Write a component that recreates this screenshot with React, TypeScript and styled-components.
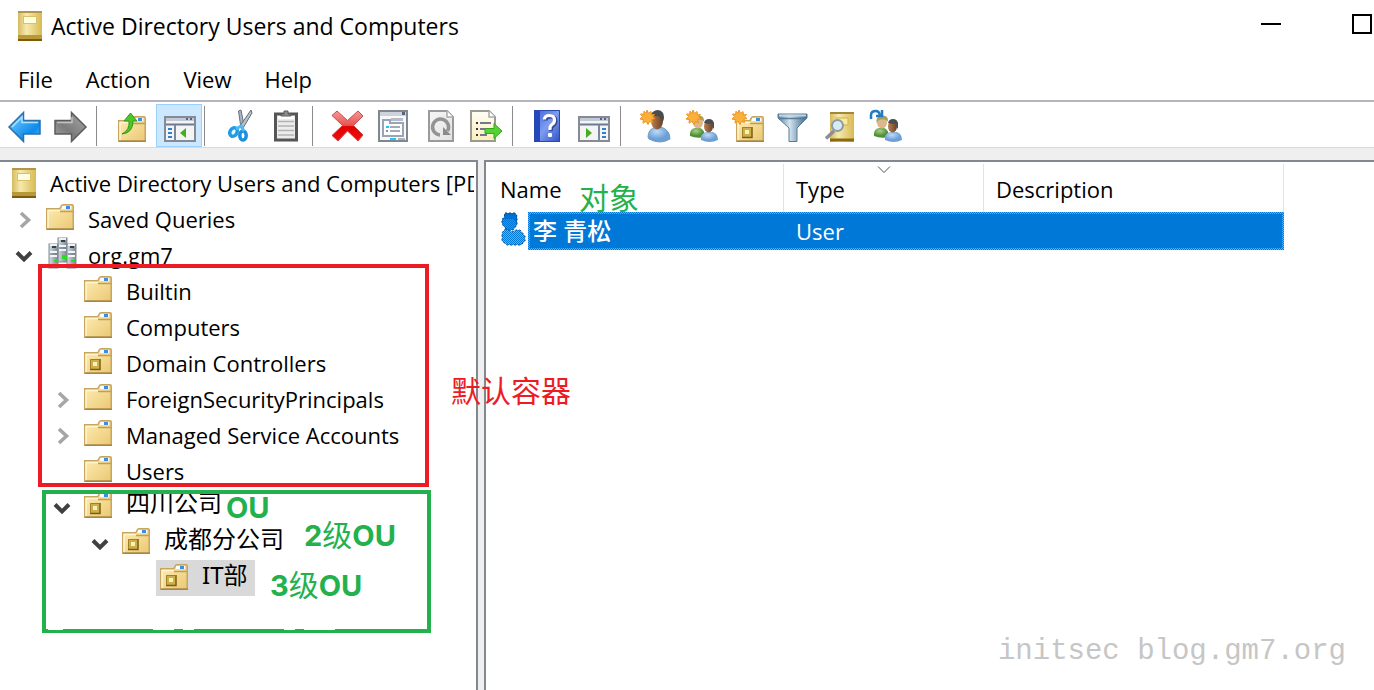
import React from "react";
import styled, { createGlobalStyle, css } from "styled-components";

const Global = createGlobalStyle`
  *, *::before, *::after { box-sizing: border-box; }
  body {
    margin: 0;
    background: #fff;
    color: #000;
    font-family: "Open Sans", "Noto Sans CJK SC", sans-serif;
    font-size: 22px;
    line-height: 30px;
  }
  button { font: inherit; color: inherit; background: none; border: 0; padding: 0; }
`;

/* ---------- window frame ---------- */

const Window = styled.div`
  position: relative;
  display: flex;
  flex-direction: column;
  min-height: 100vh;
  overflow: hidden;
`;

const TitleBar = styled.header`
  display: flex;
  align-items: flex-start;
  height: 62px;
  padding: 11px 2px 0 18px;
`;

const Title = styled.h1`
  flex: 1;
  margin: 0 0 0 9px;
  font-size: 23px;
  font-weight: 400;
  line-height: 30px;
`;

const Controls = styled.div`
  display: flex;
  gap: 71px;
  padding-top: 3px;
`;

const ControlButton = styled.button`
  display: flex;
  align-items: center;
  width: 20px;
  height: 20px;
`;

const MinimizeMark = styled.span`
  width: 20px;
  height: 2px;
  background: #000;
`;

const MaximizeMark = styled.span`
  width: 20px;
  height: 20px;
  border: 2px solid #000;
`;

const MenuBar = styled.nav`
  display: flex;
  gap: 33px;
  height: 38px;
  padding-left: 18px;
`;

const MenuButton = styled.button`
  height: 34px;
`;

const Toolbar = styled.div`
  display: flex;
  height: 48px;
  padding: 2px 0 0 2px;
  border-top: 2px solid #b4b4ba;
  border-bottom: 1px solid #d9d9d9;
`;

const ToolGroup = styled.div`
  display: flex;
  & + & {
    margin-left: 2px;
    padding-left: 14px;
    background: linear-gradient(#8c8c8c, #8c8c8c) 0 2px / 1px 40px no-repeat;
  }
`;

const ToolButton = styled.button<{ $active?: boolean }>`
  display: flex;
  align-items: flex-start;
  justify-content: center;
  width: 46px;
  height: 43px;
  padding-top: 5px;
  border: 1px solid ${(p) => (p.$active ? "#99d1ff" : "transparent")};
  background: ${(p) => (p.$active ? "#cce8ff" : "transparent")};
`;

const Glyph = styled.svg`
  flex: none;
  display: block;
  overflow: visible;
`;

const Workspace = styled.main`
  position: relative;
  display: flex;
  flex: 1;
  gap: 6px;
  padding-top: 12px;
  background: #efefef;
`;

/* ---------- tree ---------- */

const TreePane = styled.section`
  flex: 0 0 478px;
  min-width: 0;
  padding: 2px 2px 0 0;
  border-top: 2px solid #828790;
  border-right: 2px solid #828790;
  background: #fff;
`;

const Tree = styled.ul`
  margin: 0;
  padding: 0;
  list-style: none;
  overflow: hidden;
`;

const TreeRow = styled.li<{ $level: number }>`
  display: flex;
  height: 36px;
  padding-left: ${(p) => (p.$level ? (p.$level - 1) * 38 + 8 : 8)}px;
`;

const TogglerCell = styled.span`
  flex: none;
  width: 34px;
  padding: 11px 0 0 7px;
`;

const Toggler = styled.button`
  display: block;
`;

const TreeLabel = styled.span<{ $selected?: boolean; $cjk?: boolean }>`
  display: flex;
  gap: 14px;
  padding: 4px 8px 0 4px;
  white-space: nowrap;
  background: ${(p) => (p.$selected ? "#d9d9d9" : "transparent")};
  ${(p) =>
    p.$cjk &&
    css`
      font-family: "Noto Sans", "Noto Sans CJK SC", sans-serif;
      font-size: 24px;
      line-height: 22px;
    `}
`;

/* ---------- list ---------- */

const ListPane = styled.section`
  flex: 1;
  min-width: 0;
  border-top: 2px solid #828790;
  border-left: 2px solid #828790;
  background: #fff;
`;

const List = styled.table`
  width: 798px;
  table-layout: fixed;
  border-spacing: 0;
  text-align: left;
`;

const Heading = styled.th<{ $width: number }>`
  position: relative;
  width: ${(p) => p.$width}px;
  height: 50px;
  padding: 4px 12px 0 12px;
  font-weight: 400;
  background: linear-gradient(#e3e3e3, #e3e3e3) 100% 2px / 1px 100% no-repeat;
  &:first-child { padding-left: 14px; }
`;

const SortMark = styled(Glyph)`
  position: absolute;
  top: 4px;
  left: 50%;
  margin-left: -6px;
`;

const focusRing = css`
  border: 0 solid transparent;
  border-top-width: 2px;
  border-bottom-width: 2px;
  background:
    linear-gradient(#0078d7, #0078d7) padding-box,
    repeating-conic-gradient(#f58a30 0 25%, #0078d7 0 50%) 0 0 / 2px 2px border-box;
  color: #fff;
`;

const SelectedCell = styled.td<{ $last?: boolean }>`
  ${focusRing}
  height: 38px;
  padding: 0 12px;
  border-right-width: ${(p) => (p.$last ? 2 : 0)}px;
`;

const NameCell = styled.td`
  padding: 0;
`;

const NameLine = styled.div`
  display: flex;
  padding-left: 14px;
`;

const NameText = styled.span`
  ${focusRing}
  flex: 1;
  height: 38px;
  margin-left: 2px;
  padding-left: 3px;
  border-left-width: 2px;
  font-size: 24px;
  font-weight: 500;
  line-height: 34px;
`;

/* ---------- annotations ---------- */

const Frame = styled.div<{ $color: string; $x: number; $y: number; $w: number; $h: number }>`
  position: absolute;
  left: ${(p) => p.$x}px;
  top: ${(p) => p.$y}px;
  width: ${(p) => p.$w}px;
  height: ${(p) => p.$h}px;
  border: 4px solid ${(p) => p.$color};
  pointer-events: none;
`;

const FrameGaps = styled(Glyph)`
  position: absolute;
  left: 0;
  bottom: -4px;
`;

const Note = styled.span<{ $color: string; $x: number; $y: number }>`
  position: absolute;
  left: ${(p) => p.$x}px;
  top: ${(p) => p.$y}px;
  color: ${(p) => p.$color};
  font-family: Inter, "Noto Sans CJK SC", sans-serif;
  font-size: 30px;
  line-height: 36px;
  font-weight: 400;
  white-space: nowrap;
  pointer-events: none;
`;

const Strong = styled.b`
  font-size: 29px;
  font-weight: 700;
`;

const Watermark = styled.span`
  position: absolute;
  right: 28px;
  bottom: 20px;
  color: #c6c6c6;
  font-family: "Liberation Mono", monospace;
  font-size: 29px;
  line-height: 36px;
`;

/* ---------- drawings ---------- */

const Defs = () => (
  <Glyph width="0" height="0" style={{ position: "absolute" }} aria-hidden>
    <defs>
      <linearGradient id="book" x2="1"><stop offset="0" stopColor="#d6ba60" /><stop offset=".35" stopColor="#f5eaac" /><stop offset="1" stopColor="#d8ba54" /></linearGradient>
      <linearGradient id="folder" x2="1" y2="1"><stop offset="0" stopColor="#ffeeb4" /><stop offset="1" stopColor="#eac874" /></linearGradient>
      <linearGradient id="blue" x2="1" y2="1"><stop offset="0" stopColor="#7fd3ff" /><stop offset=".7" stopColor="#0d8bec" /><stop offset="1" stopColor="#4fb8f8" /></linearGradient>
      <linearGradient id="grey" x2="1" y2="1"><stop offset="0" stopColor="#a8a8a8" /><stop offset=".6" stopColor="#7c7c7c" /><stop offset="1" stopColor="#a4a4a4" /></linearGradient>
      <linearGradient id="red" y2="1" x2="0"><stop offset="0" stopColor="#f49a98" /><stop offset=".48" stopColor="#e8534f" /><stop offset=".52" stopColor="#e00000" /><stop offset="1" stopColor="#f01010" /></linearGradient>
      <linearGradient id="page" x2="1" y2="1"><stop offset="0" stopColor="#f6f6f6" /><stop offset="1" stopColor="#e2e2e2" /></linearGradient>
      <linearGradient id="cream" x2="0" y2="1"><stop offset="0" stopColor="#fffef5" /><stop offset="1" stopColor="#fbeebb" /></linearGradient>
      <linearGradient id="help" x2="1" y2="1"><stop offset="0" stopColor="#3a63d4" /><stop offset=".5" stopColor="#7e9cf0" /><stop offset="1" stopColor="#2e4fc4" /></linearGradient>
      <radialGradient id="shirt" cx=".4" cy=".3"><stop offset="0" stopColor="#bcdcfb" /><stop offset="1" stopColor="#6d9fd4" /></radialGradient>
      <radialGradient id="green" cx=".4" cy=".3"><stop offset="0" stopColor="#a5d383" /><stop offset="1" stopColor="#4f8d36" /></radialGradient>
      <linearGradient id="face" x2="1"><stop offset="0" stopColor="#b98055" /><stop offset="1" stopColor="#6d4022" /></linearGradient>
      <linearGradient id="funnel" x2="1"><stop offset="0" stopColor="#5b7f9d" /><stop offset=".4" stopColor="#d3e4ef" /><stop offset="1" stopColor="#3c6485" /></linearGradient>
      <linearGradient id="tower" x2="1"><stop offset="0" stopColor="#d5dbe0" /><stop offset="1" stopColor="#7b8790" /></linearGradient>
      <pattern id="dither" width="2" height="2" patternUnits="userSpaceOnUse"><path d="M0 0h1v1H0zM1 1h1v1H1z" fill="#0078d7" /></pattern>
    </defs>
  </Glyph>
);

const Icon = ({ w = 32, h = 32, children }: { w?: number; h?: number; children: React.ReactNode }) => (
  <Glyph width={w} height={h} viewBox={`0 0 ${w} ${h}`} aria-hidden>{children}</Glyph>
);

const BookIcon = () => (
  <Icon w={24} h={30}>
    <rect width="24" height="30" fill="url(#book)" />
    <rect width="24" height="2" fill="#b3964a" />
    <rect y="24" width="24" height="6" fill="#b8983a" />
    <rect y="28" width="24" height="2" fill="#7d5c05" />
    <rect x="5" y="5" width="14" height="8" fill="#d9c168" />
    <rect x="6" y="6" width="12" height="6" fill="#fffde0" />
  </Icon>
);

const FolderShape = () => (
  <>
    <path d="M.75 4.75h13l2-3.500q.5-.5 1.500-.5H26q1.250 0 1.250 1.500v23H.75z" fill="url(#folder)" stroke="#c8a45c" strokeWidth="1.500" />
    <path d="M2 24.500V6.500h12" fill="none" stroke="#fff5cf" strokeWidth="1.500" />
    <path d="M14 7.500h13" stroke="#c49d50" strokeWidth="1.500" />
    <rect x="16" y="2" width="9" height="3" fill="#fff" />
    <rect x="20" y="2" width="4" height="3" fill="#3a8ee0" />
    <path d="M1 25.200h27" stroke="#a98544" strokeWidth="1.600" />
  </>
);

const UnitBadge = () => (
  <>
    <rect x="6" y="11" width="10" height="11" fill="#cdb04a" />
    <path d="M6 21.500h10V11" fill="none" stroke="#7d5f0a" strokeWidth="1.500" />
    <path d="M6.500 21V11.500H15" fill="none" stroke="#a08028" />
    <rect x="9" y="14" width="4" height="4" fill="#f6f2bb" />
  </>
);

const FolderIcon = ({ unit }: { unit?: boolean }) => (
  <Icon w={28} h={26}><FolderShape />{unit && <UnitBadge />}</Icon>
);

const DomainIcon = () => (
  <Icon w={28} h={28}>
    {[[12, -2], [3, 4], [21, 4]].map(([x, y]) => (
      <g key={x} transform={`translate(${x} ${y})`}>
        <rect width="9" height="24" fill="url(#tower)" stroke="#808b94" />
        <path d="M1 1h7" stroke="#eef1f3" strokeWidth="2" />
        <path d="M3 3h4" stroke="#33414d" strokeWidth="2" />
        <path d="M1 8h7M1 12h7" stroke="#f2f5f7" strokeWidth="2" />
        <path d="M1 10h7" stroke="#66727c" />
      </g>
    ))}
    <rect x="16" y="15" width="5" height="4" fill="#25dd22" />
    <path d="M8 21h4M25 21h4" stroke="#25dd22" strokeWidth="2" />
  </Icon>
);

const Chevron = ({ open }: { open?: boolean }) => (
  <Icon w={18} h={18}>
    {open ? (
      <path d="M2 5.500l7 7 7-7" fill="none" stroke="#404040" strokeWidth="4" />
    ) : (
      <path d="M6 2l7.500 7L6 16" fill="none" stroke="#a6a6a6" strokeWidth="3.600" />
    )}
  </Icon>
);

const arrow = "M0 17L14.5 2.5V10.5H31V24H14.5V31.5z";
const BackIcon = () => (
  <Icon><path d={arrow} fill="url(#blue)" stroke="#2b6fae" strokeWidth="1.500" /><path d="M3 17L13 7v5.500h16" fill="none" stroke="#a8e2ff" strokeWidth="1.500" /></Icon>
);
const ForwardIcon = () => (
  <Icon><g transform="translate(31 0) scale(-1 1)"><path d={arrow} fill="url(#grey)" stroke="#5c5c5c" strokeWidth="1.500" /><path d="M14 7v5.500h15" fill="none" stroke="#c4c4c4" strokeWidth="1.500" /></g></Icon>
);

const UpIcon = () => (
  <Icon>
    <g transform="translate(1 6)"><FolderShape /></g>
    <path d="M5 24q8-4 7-13H7l6.500-8 6.500 8h-4q0 12-11 13z" fill="#4fc628" stroke="#349818" />
  </Icon>
);

const PaneIcon = ({ flip }: { flip?: boolean }) => (
  <Icon>
    <g transform={flip ? "translate(-1 6)" : "translate(1 6)"}>
      <rect x="1" y="1" width="30" height="24" fill="#f4f4f4" stroke="#858a96" strokeWidth="2" />
      <path d="M2 3.500h28" stroke="#c3cad6" strokeWidth="3" />
      <path d="M22 3h2M26 3h2" stroke="#56637e" strokeWidth="2" />
      <path d="M2 8.500h28" stroke="#6d7a94" strokeWidth="2" />
      {flip ? (
        <>
          <path d="M21 9v15" stroke="#7b879c" strokeWidth="2" />
          <path d="M24 13h4M24 17h4M24 21h4" stroke="#2f80cf" strokeWidth="2" />
          <path d="M8 12l6 5-6 5z" fill="#43ae22" />
        </>
      ) : (
        <>
          <path d="M11 9v15" stroke="#7b879c" strokeWidth="2" />
          <path d="M4 13h4M4 17h4M4 21h4" stroke="#2f80cf" strokeWidth="2" />
          <path d="M22 12l-6 5 6 5z" fill="#43ae22" />
        </>
      )}
    </g>
  </Icon>
);

const CutIcon = () => (
  <Icon>
    <path d="M13.500 1l2.500-1 3 15-3 3z" fill="#a9b5c1" stroke="#66727f" />
    <path d="M26 0l1 3-9 15-3-2z" fill="#b9c3cc" stroke="#5e6a77" />
    <ellipse cx="8.500" cy="22" rx="3.500" ry="4.500" transform="rotate(30 8.500 22)" fill="none" stroke="#1b9de8" strokeWidth="3.500" />
    <ellipse cx="18" cy="25.500" rx="3.200" ry="4.500" fill="none" stroke="#1b8fe0" strokeWidth="3.500" />
    <path d="M11 19l5-3 3 5" fill="none" stroke="#4fb9f2" strokeWidth="3" />
  </Icon>
);

const ClipboardIcon = () => (
  <Icon>
    <rect x="4.500" y="4" width="21" height="26" fill="#ececec" stroke="#555" strokeWidth="3" />
    <path d="M7 11.500h16M7 16h16M7 20.500h16M7 25h16" stroke="#b2b2b2" strokeWidth="1.500" />
    <path d="M7 7.500h16" stroke="#fff" strokeWidth="3" />
    <path d="M10 6V4h3V1h4v3h3v2z" fill="#8d8d8d" stroke="#5a5a5a" />
  </Icon>
);

const DeleteIcon = () => (
  <Icon>
    <path d="M4 1l10.500 9.500L25 1l5 5-9.500 9.500L30 25l-5 6-10.500-10L5 31l-6-5.500L9.500 15.500-1 5.500z" fill="url(#red)" stroke="#c94a48" />
  </Icon>
);

const PropertiesIcon = () => (
  <Icon>
    <g transform="translate(-1 0)">
      <rect x="1" y="1" width="28" height="30" fill="#f8f9fa" stroke="#7f878f" strokeWidth="2" />
      <path d="M2 4h26" stroke="#cdd3d9" strokeWidth="4" />
      <rect x="24" y="2" width="3" height="3" fill="#56637e" />
      <path d="M5 10h7v3h13v13H5z" fill="#fff" stroke="#9ba3b4" strokeWidth="2" />
      <path d="M13 9.500h12" stroke="#b5bccb" strokeWidth="3" />
      <path d="M12 17h10M12 21h10" stroke="#88909b" strokeWidth="1.500" />
      <path d="M8 17h3" stroke="#20c6f6" strokeWidth="2" />
      <path d="M8 21h2" stroke="#88909b" strokeWidth="2" />
      <path d="M12 29h6" stroke="#20c6f6" strokeWidth="2" />
      <path d="M20 29h7" stroke="#adb4bb" strokeWidth="2" />
    </g>
  </Icon>
);

const RefreshIcon = () => (
  <Icon>
    <path d="M4 1h18l6 6v24H4z" fill="url(#page)" stroke="#9a9a9a" strokeWidth="2" />
    <path d="M22 1v6h6" fill="#fff" stroke="#a9a9a9" strokeWidth="1.500" />
    <path d="M15 25a8 8 0 1 1 7.500-4" fill="none" stroke="#939393" strokeWidth="3.500" />
    <path d="M18 17v8h8z" fill="#8a8a8a" />
  </Icon>
);

const ExportIcon = () => (
  <Icon>
    <path d="M0 1h18l6 6v24H0z" fill="url(#cream)" stroke="#9a9a92" strokeWidth="2" />
    <path d="M18 1v6h6" fill="#fff" stroke="#a9a9a9" strokeWidth="1.500" />
    <path d="M5 13h2M5 19h2M5 25h2" stroke="#333348" strokeWidth="2" />
    <path d="M9 13h11M9 19h7M9 25h7" stroke="#77778c" strokeWidth="2" />
    <path d="M14 18.500h9V13.500l8 7.500-8 7.500v-5h-9z" fill="#54d233" stroke="#35a51b" />
  </Icon>
);

const HelpIcon = () => (
  <Icon>
    <rect x="1" width="26" height="32" fill="url(#help)" />
    <rect x="1" width="6" height="32" fill="#2547bd" />
    <path d="M1.500 .5h25v31h-25z" fill="none" stroke="#2a48ac" />
    <path d="M11.500 9.500q0-4 5-4t5 4.500q0 3-2.500 4.500t-2 5.500" fill="none" stroke="#33469a" strokeWidth="4" transform="translate(1 1)" />
    <path d="M11.500 9.500q0-4 5-4t5 4.500q0 3-2.500 4.500t-2 5.500" fill="none" stroke="#fff" strokeWidth="3.200" />
    <rect x="15" y="23" width="4" height="4" rx="1" fill="#fff" />
  </Icon>
);

const Star = () => (
  <path d="M6 0l1.600 3.500L10 1.500l.5 3.500 3-.5-2 2.500 2.500 1.500-3.500 1 1 3-3-1L7 14.500l-2-3.300-3 2 .4-3.500L-1 9l2.500-2.500L-.5 4l3.200.3L3 1.200l2 2.200z" fill="#fbb03b" stroke="#ee9420" />
);

const Pair = () => (
  <>
    <path d="M3 24q0-5 5-6h5q5 2 5 9-8 2-15-1z" fill="url(#green)" />
    <ellipse cx="11" cy="12.500" rx="5" ry="6" fill="#dcb78d" />
    <path d="M5.500 13q-1-7 5.500-7.500t6 6q-4-3-7-2-3 0-4.500 3.500z" fill="#a7a058" />
    <path d="M14 28q0-5 6-6h6q5 2 5 8-8 4-17 0z" fill="url(#shirt)" />
    <ellipse cx="21.500" cy="16.500" rx="4.500" ry="6" fill="url(#face)" />
    <path d="M17 13q1-4 5-4t5 4v6q-2-2-2-5-4 0-8-1z" fill="#4a4d50" />
  </>
);

const NewUserIcon = () => (
  <Icon>
    <path d="M7 27q0-8 8-10h5q9 3 9 12-10 6-21 0z" fill="url(#shirt)" stroke="#7099c4" />
    <ellipse cx="16" cy="11" rx="6" ry="8.500" fill="url(#face)" />
    <path d="M10 4q3-4 7-4 6 1 6 7 0 4-2 5-1-5-4-6-4 1-7-2z" fill="#4a4d50" />
    <Star />
  </Icon>
);
const NewGroupIcon = () => (<Icon><Pair /><Star /></Icon>);
const NewUnitIcon = () => (
  <Icon><g transform="translate(3 6)"><FolderShape /><UnitBadge /></g><Star /></Icon>
);
const FilterIcon = () => (
  <Icon>
    <path d="M-1 4h29v4L18 18v13.500h-8V18L-1 8z" fill="url(#funnel)" stroke="#5a7c96" />
    <path d="M0 5.500h27" stroke="#c2d6e4" strokeWidth="2" />
    <path d="M-.5 8.500h28" stroke="#587d9b" strokeWidth="1.500" />
  </Icon>
);
const FindIcon = () => (
  <Icon>
    <g transform="translate(5 2)">
      <rect width="24" height="30" fill="url(#book)" />
      <path d="M0 1h24" stroke="#a3863a" strokeWidth="2" />
      <path d="M0 28h24" stroke="#8b6a10" strokeWidth="3" />
      <path d="M5 6h13v7H10" fill="#f8eba0" stroke="#cdb150" />
    </g>
    <path d="M9 21l-8 7.500" stroke="#8e8e98" strokeWidth="3.500" />
    <circle cx="12.500" cy="15.500" r="5.500" fill="#d5ecf5" stroke="#909aa0" strokeWidth="2" />
  </Icon>
);
const AddToGroupIcon = () => (
  <Icon><Pair /><path d="M0 9V5q0-4 5-4 3 0 4 4" fill="none" stroke="#1f7cc4" strokeWidth="2.500" /><path d="M5 6h6V0" fill="none" stroke="#1f7cc4" strokeWidth="2.500" /></Icon>
);

const PersonIcon = () => {
  const head = "M4 0h10l2 3v9l-4 5H6l-5-6V6l2-1z";
  const body = "M4 16h4l3 3 4-2h4l5 6v5l-4 4H6l-5-4v-8z";
  return (
    <Icon w={26} h={34}>
      <g transform="translate(1 1)">
        <path d={body} fill="#5fb0f4" />
        <path d={head} fill="#5b84a6" />
        <path d="M4 0h10l2 3v8l-4-5H3z" fill="#1b5f9c" />
        <path d={body} fill="url(#dither)" stroke="#0a4a86" strokeDasharray="2 2" />
        <path d={head} fill="url(#dither)" stroke="#0a4a86" strokeDasharray="2 2" />
      </g>
    </Icon>
  );
};

/* ---------- data ---------- */

const toolGroups: { label: string; icon: React.FC; active?: boolean }[][] = [
  [{ label: "Back", icon: BackIcon }, { label: "Forward", icon: ForwardIcon }],
  [{ label: "Up one level", icon: UpIcon }, { label: "Show console tree", icon: PaneIcon, active: true }],
  [{ label: "Cut", icon: CutIcon }, { label: "Paste", icon: ClipboardIcon }],
  [
    { label: "Delete", icon: DeleteIcon },
    { label: "Properties", icon: PropertiesIcon },
    { label: "Refresh", icon: RefreshIcon },
    { label: "Export list", icon: ExportIcon },
  ],
  [{ label: "Help topics", icon: HelpIcon }, { label: "Show action pane", icon: () => <PaneIcon flip /> }],
  [
    { label: "New user", icon: NewUserIcon },
    { label: "New group", icon: NewGroupIcon },
    { label: "New organizational unit", icon: NewUnitIcon },
    { label: "Filter", icon: FilterIcon },
    { label: "Find", icon: FindIcon },
    { label: "Add to group", icon: AddToGroupIcon },
  ],
];

type Node = {
  text: string;
  level: number;
  kind: "root" | "folder" | "domain" | "unit";
  open?: boolean;
  cjk?: boolean;
  selected?: boolean;
};

const nodes: Node[] = [
  { text: "Active Directory Users and Computers [PD", level: 0, kind: "root" },
  { text: "Saved Queries", level: 1, kind: "folder", open: false },
  { text: "org.gm7", level: 1, kind: "domain", open: true },
  { text: "Builtin", level: 2, kind: "folder" },
  { text: "Computers", level: 2, kind: "folder" },
  { text: "Domain Controllers", level: 2, kind: "unit" },
  { text: "ForeignSecurityPrincipals", level: 2, kind: "folder", open: false },
  { text: "Managed Service Accounts", level: 2, kind: "folder", open: false },
  { text: "Users", level: 2, kind: "folder" },
  { text: "四川公司", level: 2, kind: "unit", open: true, cjk: true },
  { text: "成都分公司", level: 3, kind: "unit", open: true, cjk: true },
  { text: "IT部", level: 4, kind: "unit", cjk: true, selected: true },
];

const RED = "#ed1c24";
const GREEN = "#22b14c";

const NodeIcon = ({ kind }: { kind: Node["kind"] }) => {
  if (kind === "root") return <BookIcon />;
  if (kind === "domain") return <DomainIcon />;
  return <FolderIcon unit={kind === "unit"} />;
};

export default function App() {
  return (
    <Window>
      <Global />
      <Defs />
      <TitleBar>
        <BookIcon />
        <Title>Active Directory Users and Computers</Title>
        <Controls>
          <ControlButton aria-label="Minimize"><MinimizeMark /></ControlButton>
          <ControlButton aria-label="Maximize"><MaximizeMark /></ControlButton>
        </Controls>
      </TitleBar>
      <MenuBar>
        {["File", "Action", "View", "Help"].map((m) => <MenuButton key={m}>{m}</MenuButton>)}
      </MenuBar>
      <Toolbar role="toolbar">
        {toolGroups.map((group, i) => (
          <ToolGroup key={i}>
            {group.map(({ label, icon: ToolIcon, active }) => (
              <ToolButton key={label} aria-label={label} $active={active}><ToolIcon /></ToolButton>
            ))}
          </ToolGroup>
        ))}
      </Toolbar>
      <Workspace>
        <TreePane>
          <Tree>
            {nodes.map((n) => (
              <TreeRow key={n.text} $level={n.level}>
                {n.level > 0 && (
                  <TogglerCell>
                    {n.open !== undefined && (
                      <Toggler aria-label={`Toggle ${n.text}`} aria-expanded={n.open}>
                        <Chevron open={n.open} />
                      </Toggler>
                    )}
                  </TogglerCell>
                )}
                <TreeLabel $selected={n.selected} $cjk={n.cjk}>
                  <NodeIcon kind={n.kind} />
                  <span>{n.text}</span>
                </TreeLabel>
              </TreeRow>
            ))}
          </Tree>
        </TreePane>
        <ListPane>
          <List>
            <thead>
              <tr>
                <Heading $width={298}>Name</Heading>
                <Heading $width={200}>
                  Type
                  <SortMark width="12" height="7" viewBox="0 0 12 7"><path d="M0 .5l6 6 6-6" fill="none" stroke="#555" /></SortMark>
                </Heading>
                <Heading $width={300}>Description</Heading>
              </tr>
            </thead>
            <tbody>
              <tr>
                <NameCell>
                  <NameLine><PersonIcon /><NameText>李 青松</NameText></NameLine>
                </NameCell>
                <SelectedCell>User</SelectedCell>
                <SelectedCell $last />
              </tr>
            </tbody>
          </List>
        </ListPane>
        <Frame $color={RED} $x={38} $y={116} $w={391} $h={223} />
        <Frame $color={GREEN} $x={42} $y={342} $w={389} $h={143}>
          <FrameGaps width="381" height="4" viewBox="0 0 381 4" aria-hidden>
            <path d="M2 .5h15M107 .5h21M137 .5h11M238 .5h11M258 .5h31" stroke="#fff" />
          </FrameGaps>
        </Frame>
        <Note $color={RED} $x={451} $y={225}>默认容器</Note>
        <Note $color={GREEN} $x={579} $y={32}>对象</Note>
        <Note $color={GREEN} $x={226} $y={341}><Strong>OU</Strong></Note>
        <Note $color={GREEN} $x={304} $y={369}><Strong>2</Strong>级<Strong>OU</Strong></Note>
        <Note $color={GREEN} $x={270} $y={419}><Strong>3</Strong>级<Strong>OU</Strong></Note>
      </Workspace>
      <Watermark>initsec blog.gm7.org</Watermark>
    </Window>
  );
}
